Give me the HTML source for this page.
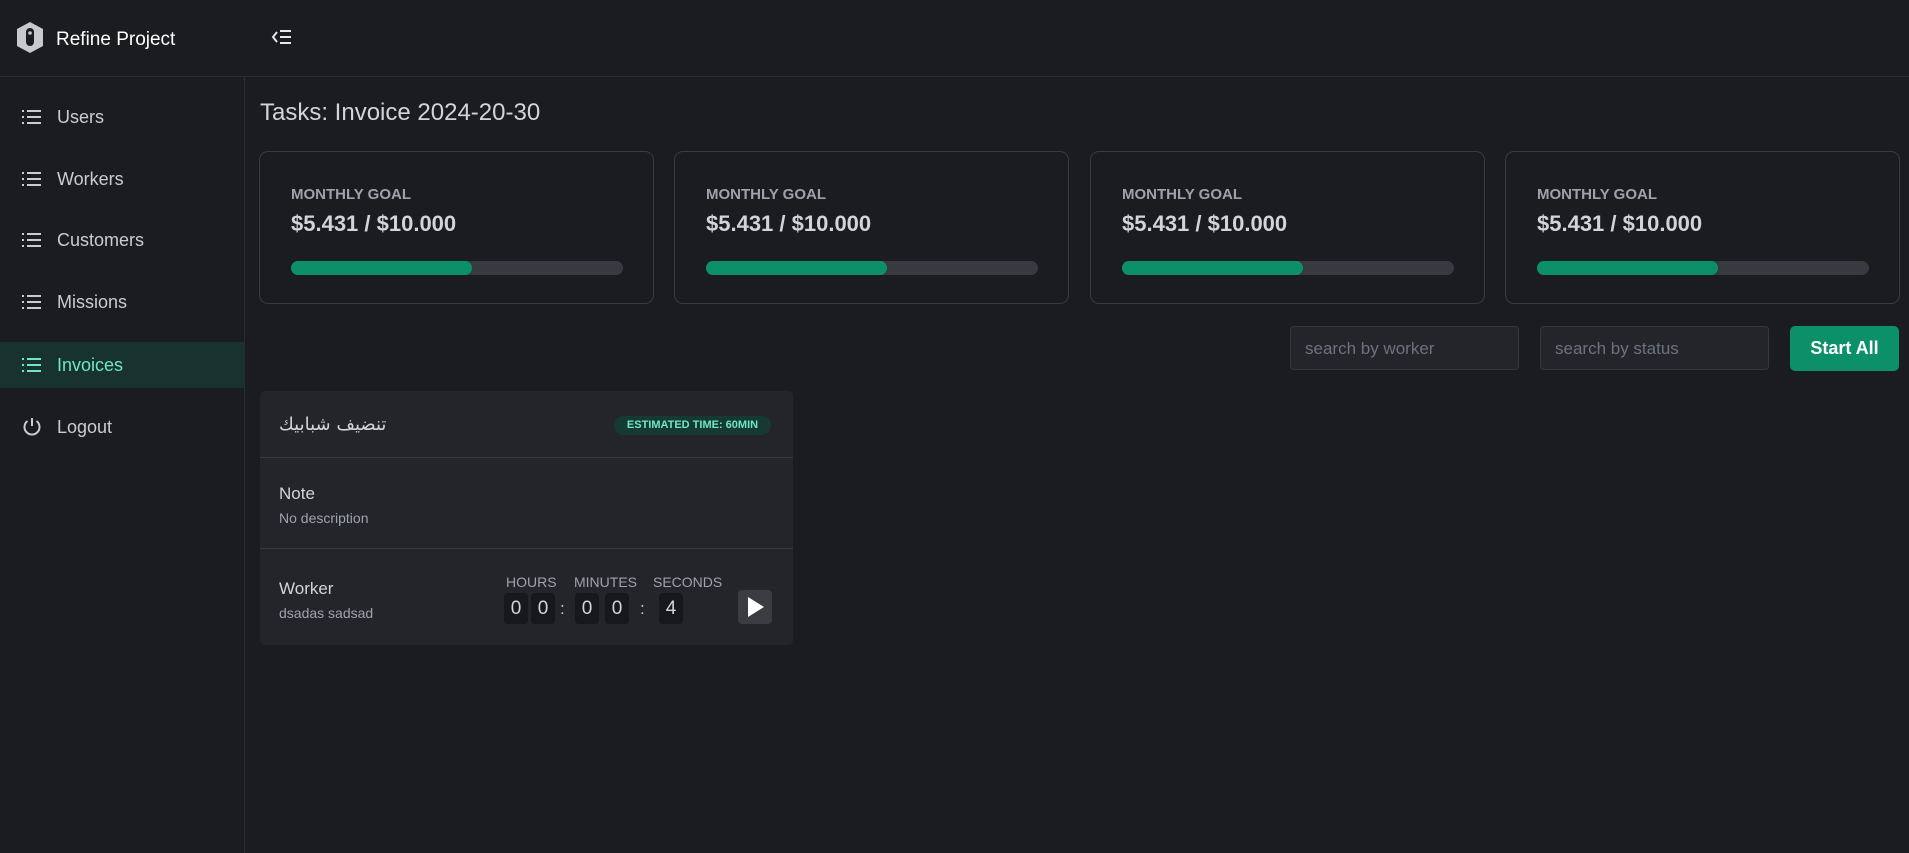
<!DOCTYPE html>
<html><head><meta charset="utf-8"><style>
*{box-sizing:border-box;margin:0;padding:0}
body{width:1909px;height:853px;background:#1b1c20;font-family:"Liberation Sans","Noto Sans CJK SC",sans-serif;color:#d1d5db;position:relative;overflow:hidden}
.abs{position:absolute}
.hdr{left:0;top:0;width:1909px;height:77px;border-bottom:1px solid #2c2d33}
.side{left:0;top:77px;width:245px;height:776px;border-right:1px solid #2c2d33}
.mi{position:absolute;left:0;width:244px;height:46px;display:flex;align-items:center;font-size:18px;color:#c9cdd3}
.mi svg{position:absolute;left:22px}
.mi span{position:absolute;left:57px}
.card{position:absolute;top:151px;width:395px;height:153px;border:1px solid #3a3b41;border-radius:9px}
.card .l{position:absolute;left:31px;top:34px;font-size:15px;font-weight:bold;color:#9ca3af}
.card .v{position:absolute;left:31px;top:59px;font-size:22px;font-weight:bold;color:#d1d5db}
.card .t{position:absolute;left:31px;top:109px;width:332px;height:14px;border-radius:7px;background:#383a42}
.card .f{width:181px;height:14px;border-radius:7px;background:#0c9068}
.inp{position:absolute;top:326px;width:229px;height:44px;border:1px solid #35373d;border-radius:4px;background:#24252b;color:#6b7280;font-size:17px;padding:12px 14px}
.box{position:absolute;top:593px;width:24px;height:31px;background:#17181b;border-radius:4px;font-size:19px;color:#d1d5db;text-align:center;line-height:31px}
.lab{position:absolute;top:574px;font-size:14px;color:#9ca3af}
.col{position:absolute;top:599px;font-size:17px;color:#c9cdd3}
</style></head><body>
<div class="abs hdr"></div>
<svg class="abs" style="left:15px;top:22px" width="30" height="31" viewBox="0 0 30 31"><path d="M15 0 L28 7 V24 L15 31 L2 24 V7 Z" fill="#c7c9ce"/><rect x="11" y="6" width="8" height="18" rx="4" fill="#1b1c20"/><circle cx="15" cy="11" r="1.8" fill="#c7c9ce"/></svg>
<div class="abs" style="left:56px;top:29px;font-size:19px;color:#fff">Refine Project</div>
<svg class="abs" style="left:271px;top:28px" width="22" height="18" viewBox="0 0 22 18"><path d="M6 4 L2 9 L6 14 M9 3 H20 M9 9 H20 M9 15 H20" stroke="#e5e7eb" stroke-width="2" fill="none"/></svg>
<div class="abs side"></div>
<div class="mi" style="top:94px"><svg width="19" height="16" viewBox="0 0 19 16"><path d="M0 2h2M0 8h2M0 14h2M5 2h14M5 8h14M5 14h14" stroke="#c9cdd3" stroke-width="2"/></svg><span>Users</span></div>
<div class="mi" style="top:156px"><svg width="19" height="16" viewBox="0 0 19 16"><path d="M0 2h2M0 8h2M0 14h2M5 2h14M5 8h14M5 14h14" stroke="#c9cdd3" stroke-width="2"/></svg><span>Workers</span></div>
<div class="mi" style="top:217px"><svg width="19" height="16" viewBox="0 0 19 16"><path d="M0 2h2M0 8h2M0 14h2M5 2h14M5 8h14M5 14h14" stroke="#c9cdd3" stroke-width="2"/></svg><span>Customers</span></div>
<div class="mi" style="top:279px"><svg width="19" height="16" viewBox="0 0 19 16"><path d="M0 2h2M0 8h2M0 14h2M5 2h14M5 8h14M5 14h14" stroke="#c9cdd3" stroke-width="2"/></svg><span>Missions</span></div>
<div class="mi" style="top:342px;background:#18322d;color:#6ee7c7"><svg width="19" height="16" viewBox="0 0 19 16"><path d="M0 2h2M0 8h2M0 14h2M5 2h14M5 8h14M5 14h14" stroke="#6ee7c7" stroke-width="2"/></svg><span>Invoices</span></div>
<div class="mi" style="top:404px"><svg width="20" height="20" viewBox="0 0 20 20"><path d="M10 1V9 M5.5 4A7.5 7.5 0 1 0 14.5 4" stroke="#c9cdd3" stroke-width="2" fill="none"/></svg><span>Logout</span></div>

<div class="abs" style="left:260px;top:99px;font-size:24px;color:#d1d5db">Tasks: Invoice 2024-20-30</div>
<div class="card" style="left:259px"><div class="l">MONTHLY GOAL</div><div class="v">$5.431 / $10.000</div><div class="t"><div class="f"></div></div></div>
<div class="card" style="left:674px"><div class="l">MONTHLY GOAL</div><div class="v">$5.431 / $10.000</div><div class="t"><div class="f"></div></div></div>
<div class="card" style="left:1090px"><div class="l">MONTHLY GOAL</div><div class="v">$5.431 / $10.000</div><div class="t"><div class="f"></div></div></div>
<div class="card" style="left:1505px"><div class="l">MONTHLY GOAL</div><div class="v">$5.431 / $10.000</div><div class="t"><div class="f"></div></div></div>

<div class="inp" style="left:1290px">search by worker</div>
<div class="inp" style="left:1540px">search by status</div>
<div class="abs" style="left:1790px;top:326px;width:109px;height:45px;background:#0c9068;border-radius:5px;color:#fff;font-weight:bold;font-size:18px;text-align:center;line-height:45px">Start All</div>

<div class="abs" style="left:260px;top:391px;width:533px;height:254px;background:#24252b;border-radius:5px">
<div class="abs" style="left:0;top:66px;width:533px;border-top:1px solid #393a40"></div>
<div class="abs" style="left:0;top:157px;width:533px;border-top:1px solid #393a40"></div>
<div class="abs" style="left:19px;top:23px;font-size:18px;color:#d1d5db;font-family:'DejaVu Sans',sans-serif" dir="rtl">تنضيف شبابيك</div>
<div class="abs" style="left:354px;top:25px;width:157px;height:19px;border-radius:10px;background:#163a31;color:#6ee7c7;font-size:11px;font-weight:bold;text-align:center;line-height:19px">ESTIMATED TIME: 60MIN</div>
<div class="abs" style="left:19px;top:93px;font-size:17px;color:#d1d5db">Note</div>
<div class="abs" style="left:19px;top:119px;font-size:14px;color:#9ca3af">No description</div>
<div class="abs" style="left:19px;top:188px;font-size:17px;color:#d1d5db">Worker</div>
<div class="abs" style="left:19px;top:214px;font-size:14px;color:#9ca3af">dsadas sadsad</div>
</div>
<div class="lab" style="left:506px">HOURS</div>
<div class="lab" style="left:574px">MINUTES</div>
<div class="lab" style="left:653px">SECONDS</div>
<div class="box" style="left:504px">0</div>
<div class="box" style="left:531px">0</div>
<div class="col" style="left:560px">:</div>
<div class="box" style="left:575px">0</div>
<div class="box" style="left:605px">0</div>
<div class="col" style="left:640px">:</div>
<div class="box" style="left:659px">4</div>
<div class="abs" style="left:738px;top:590px;width:34px;height:34px;background:#3a3c42;border-radius:4px"><svg width="34" height="34" viewBox="0 0 34 34"><path d="M10 7 L26 17 L10 27 Z" fill="#fff"/></svg></div>
</body></html>
